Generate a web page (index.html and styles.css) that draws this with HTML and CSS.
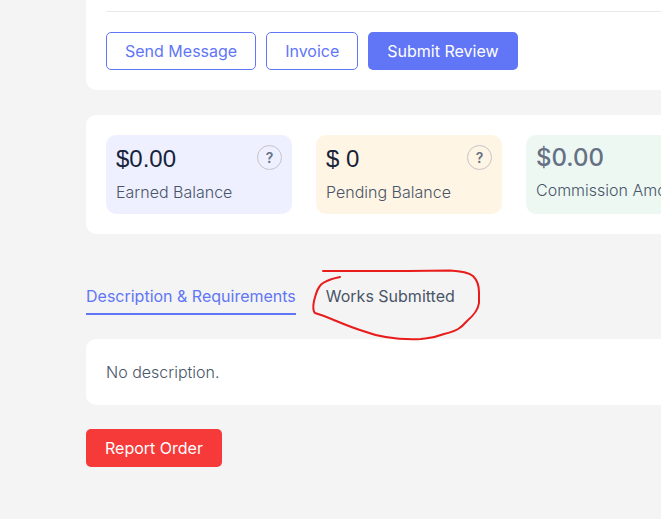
FILE: index.html
```html
<!DOCTYPE html>
<html lang="en">
<head>
<meta charset="utf-8">
<meta name="viewport" content="width=device-width, initial-scale=1">
<title>Order details</title>
<link rel="stylesheet" href="styles.css">
</head>
<body>
<main class="page">
  <section class="panel panel-top">
    <div class="actions">
      <button class="btn btn-outline" type="button">Send Message</button>
      <button class="btn btn-outline" type="button">Invoice</button>
      <button class="btn btn-primary" type="button">Submit Review</button>
    </div>
  </section>

  <section class="panel panel-stats">
    <article class="stat stat-earned">
      <div class="stat-row">
        <strong class="amount">$0.00</strong>
        <button class="help" type="button" aria-label="About earned balance">?</button>
      </div>
      <p class="stat-label">Earned Balance</p>
    </article>
    <article class="stat stat-pending">
      <div class="stat-row">
        <strong class="amount">$ 0</strong>
        <button class="help" type="button" aria-label="About pending balance">?</button>
      </div>
      <p class="stat-label">Pending Balance</p>
    </article>
    <article class="stat stat-commission">
      <div class="stat-row">
        <strong class="amount amount-muted">$0.00</strong>
      </div>
      <p class="stat-label">Commission Amount</p>
    </article>
  </section>

  <nav class="tabs">
    <a class="tab tab-active" href="#description">Description &amp; Requirements</a>
    <a class="tab tab-works" href="#works">Works Submitted
      <svg class="mark" width="172" height="76" viewBox="0 0 172 76" fill="none" stroke="#e91c1c" stroke-width="2" stroke-linecap="round" stroke-linejoin="round" aria-hidden="true">
        <path d="M13 4H98L140 3.500C150 4 158 5 163 9C168 14 169 19 169 25V36C168 44 163 49 157 54C151 61 147 64 134 67C121 72 116 71 111 72C89 73 69 70 53 64C31 57 19 50 5 46C3 44 3 39 4 34C6 26 8 19 13 16C19 12 25 11 30 10"/>
      </svg>
    </a>
  </nav>

  <section class="panel" id="description">
    <p class="description">No description.</p>
  </section>

  <button class="btn btn-danger" type="button">Report Order</button>
</main>
</body>
</html>
```

FILE: styles.css
```css
* {
  box-sizing: border-box;
}

body {
  margin: 0;
  background: #f4f4f4;
  color: #4a5568;
  font-family: Inter, "Liberation Sans", sans-serif;
  font-size: 16px;
  line-height: 24px;
}

p {
  margin: 0;
}

.page {
  padding-left: 86px;
  overflow: hidden;
}

.panel {
  background: #fff;
  border-radius: 10px 0 0 10px;
  padding: 20px 0 20px 20px;
}

.panel-top {
  padding-top: 11px;
  border-top-left-radius: 0;
}

.actions {
  display: flex;
  gap: 10px;
  padding-top: 20px;
  border-top: 1px solid #e9e9e9;
}

.btn {
  height: 38px;
  padding: 0 18px;
  border: 1px solid transparent;
  border-radius: 5px;
  font: inherit;
  white-space: nowrap;
  cursor: pointer;
}

.btn-outline {
  border-color: #6176f6;
  background: #fff;
  color: #6176f6;
}

.btn-primary {
  background: #6176f6;
  color: #fff;
}

.btn-danger {
  margin: 24px 0;
  background: #f63a3a;
  color: #fff;
}

.panel-stats {
  display: grid;
  grid-template-columns: repeat(3, 186px);
  gap: 24px;
  margin-top: 25px;
}

.stat {
  padding: 10px;
  border-radius: 10px;
}

.stat-earned {
  background: #eef0ff;
}

.stat-pending {
  background: #fff5e5;
}

.stat-commission {
  background: #edf8f3;
}

.stat-row {
  display: flex;
  justify-content: space-between;
  line-height: 28px;
}

.amount {
  color: #17233b;
  font-family: "Liberation Sans", Arial, sans-serif;
  font-size: 24px;
  font-weight: 400;
}

.amount-muted {
  color: #667085;
  font-family: Inter, sans-serif;
  font-weight: 500;
  line-height: 26px;
}

.help {
  width: 25px;
  height: 25px;
  padding: 0;
  border: 1px solid #c4c4c8;
  border-radius: 50%;
  background: transparent;
  color: #667085;
  font: 600 14px/22px Inter, sans-serif;
}

.stat-label {
  padding-top: 7px;
  font-weight: 300;
  white-space: nowrap;
}

.stat-commission .stat-row {
  line-height: 26px;
}

.tabs {
  display: flex;
  gap: 30px;
  margin: 50px 0 24px;
}

.tab {
  padding-bottom: 5px;
  border-bottom: 2px solid transparent;
  color: inherit;
  text-decoration: none;
  white-space: nowrap;
}

.tab-active {
  border-color: #6176f6;
  color: #6176f6;
}

.tab-works {
  position: relative;
}

.mark {
  position: absolute;
  top: -17px;
  left: -16px;
  pointer-events: none;
}

.description {
  padding: 1px 0;
  font-weight: 300;
}
```
